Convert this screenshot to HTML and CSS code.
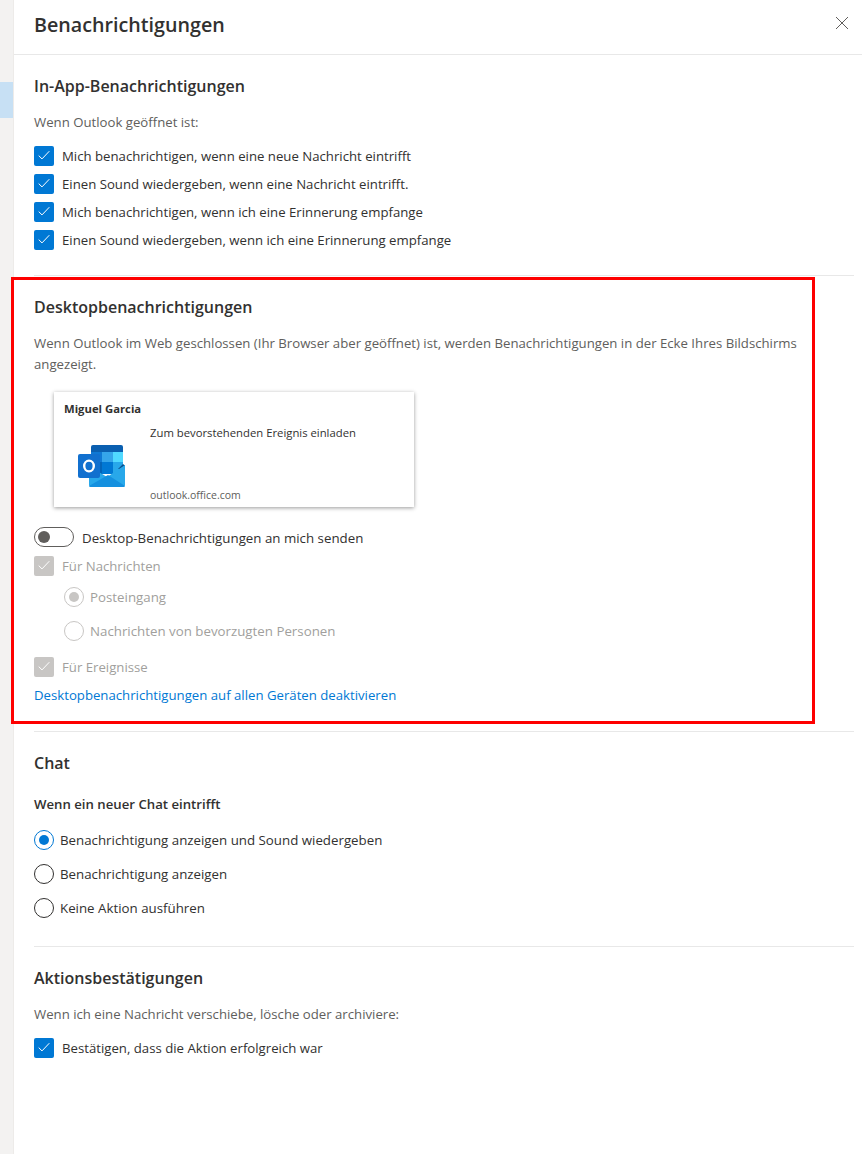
FILE: index.html
```html
<!DOCTYPE html>
<html lang="de">

<head>
    <meta charset="UTF-8">
    <title>Benachrichtigungen</title>
    <link rel="stylesheet" href="styles.css">
</head>

<body>
    <div id="container">
        <div id="sidebar">
            <div id="sidebarActive"></div>
        </div>

        <div id="panel">
            <div id="panelHeader">
                <h1 id="panelTitle">Benachrichtigungen</h1>
                <svg id="closeIcon" width="14" height="14" viewBox="0 0 14 14">
                    <path d="M1 1L13 13M13 1L1 13" stroke="#605e5c" stroke-width="1" fill="none"/>
                </svg>
            </div>

            <div class="section sectionInApp">
                <h2 class="sectionHeader">In-App-Benachrichtigungen</h2>
                <p class="sectionText">Wenn Outlook geöffnet ist:</p>
                <div class="checkList">
                    <div class="row">
                        <span class="check"><svg width="12" height="12" viewBox="0 0 12 12"><path d="M0.7 5.6L4 8.9L11.3 1.2" stroke="#fff" fill="none"/></svg></span>
                        <span class="rowLabel">Mich benachrichtigen, wenn eine neue Nachricht eintrifft</span>
                    </div>
                    <div class="row">
                        <span class="check"><svg width="12" height="12" viewBox="0 0 12 12"><path d="M0.7 5.6L4 8.9L11.3 1.2" stroke="#fff" fill="none"/></svg></span>
                        <span class="rowLabel">Einen Sound wiedergeben, wenn eine Nachricht eintrifft.</span>
                    </div>
                    <div class="row">
                        <span class="check"><svg width="12" height="12" viewBox="0 0 12 12"><path d="M0.7 5.6L4 8.9L11.3 1.2" stroke="#fff" fill="none"/></svg></span>
                        <span class="rowLabel">Mich benachrichtigen, wenn ich eine Erinnerung empfange</span>
                    </div>
                    <div class="row">
                        <span class="check"><svg width="12" height="12" viewBox="0 0 12 12"><path d="M0.7 5.6L4 8.9L11.3 1.2" stroke="#fff" fill="none"/></svg></span>
                        <span class="rowLabel">Einen Sound wiedergeben, wenn ich eine Erinnerung empfange</span>
                    </div>
                </div>
            </div>

            <div class="section sectionDesktop">
                <h2 class="sectionHeader">Desktopbenachrichtigungen</h2>
                <p class="sectionText desktopText">Wenn Outlook im Web geschlossen (Ihr Browser aber geöffnet) ist, werden Benachrichtigungen in der Ecke Ihres Bildschirms angezeigt.</p>

                <div id="previewCard">
                    <div id="previewName">Miguel Garcia</div>
                    <div id="previewBody">
                        <svg id="outlookLogo" width="48" height="44" viewBox="0 0 48 44">
                            <path d="M13 2a2 2 0 0 1 2-2h28a2 2 0 0 1 2 2v6H13z" fill="#0a5fb0"/>
                            <rect x="13" y="7" width="11" height="10" fill="#0f78d4"/>
                            <rect x="24" y="7" width="11" height="10" fill="#35a5ea"/>
                            <rect x="35" y="7" width="10" height="10" fill="#50d9ff"/>
                            <rect x="13" y="17" width="11" height="12" fill="#0364b8"/>
                            <rect x="24" y="17" width="11" height="12" fill="#0078d4"/>
                            <rect x="35" y="17" width="10" height="12" fill="#28a8ea"/>
                            <path d="M45 19L47 20.500V24L40 24z" fill="#0a4f8c"/>
                            <path d="M11 21L29 32L47 20V40a2 2 0 0 1-2 2H13a2 2 0 0 1-2-2z" fill="#28a8ea"/>
                            <path d="M11 41L30 30L47 41a2 2 0 0 1-2 1H13a2 2 0 0 1-2-1z" fill="#1490df"/>
                            <rect x="0" y="9" width="22" height="24" rx="2" fill="#1170cf"/>
                            <ellipse cx="11" cy="21" rx="4.800" ry="5.400" fill="none" stroke="#fff" stroke-width="2.400"/>
                        </svg>
                        <div id="previewText">
                            <div>Zum bevorstehenden Ereignis einladen</div>
                            <div id="previewUrl">outlook.office.com</div>
                        </div>
                    </div>
                </div>

                <div class="toggleRow">
                    <span class="toggle"><span class="toggleKnob"></span></span>
                    <span class="rowLabel">Desktop-Benachrichtigungen an mich senden</span>
                </div>
                <div class="row disabled messagesRow">
                    <span class="check"><svg width="12" height="12" viewBox="0 0 12 12"><path d="M0.7 5.6L4 8.9L11.3 1.2" stroke="#fff" fill="none"/></svg></span>
                    <span class="rowLabel">Für Nachrichten</span>
                </div>
                <div class="subOptions">
                    <div class="radioRow disabled">
                        <span class="radio radioOn"></span>
                        <span class="radioLabel">Posteingang</span>
                    </div>
                    <div class="radioRow disabled">
                        <span class="radio"></span>
                        <span class="radioLabel">Nachrichten von bevorzugten Personen</span>
                    </div>
                </div>
                <div class="row disabled">
                    <span class="check"><svg width="12" height="12" viewBox="0 0 12 12"><path d="M0.7 5.6L4 8.9L11.3 1.2" stroke="#fff" fill="none"/></svg></span>
                    <span class="rowLabel">Für Ereignisse</span>
                </div>
                <a href="#" class="disableLink">Desktopbenachrichtigungen auf allen Geräten deaktivieren</a>
            </div>

            <div class="section sectionChat">
                <h2 class="sectionHeader">Chat</h2>
                <div class="subHeader">Wenn ein neuer Chat eintrifft</div>
                <div class="radioRow">
                    <span class="radio radioOn"></span>
                    <span class="radioLabel">Benachrichtigung anzeigen und Sound wiedergeben</span>
                </div>
                <div class="radioRow">
                    <span class="radio"></span>
                    <span class="radioLabel">Benachrichtigung anzeigen</span>
                </div>
                <div class="radioRow">
                    <span class="radio"></span>
                    <span class="radioLabel">Keine Aktion ausführen</span>
                </div>
            </div>

            <div class="section sectionActions">
                <h2 class="sectionHeader">Aktionsbestätigungen</h2>
                <p class="sectionText">Wenn ich eine Nachricht verschiebe, lösche oder archiviere:</p>
                <div class="row">
                    <span class="check"><svg width="12" height="12" viewBox="0 0 12 12"><path d="M0.7 5.6L4 8.9L11.3 1.2" stroke="#fff" fill="none"/></svg></span>
                    <span class="rowLabel">Bestätigen, dass die Aktion erfolgreich war</span>
                </div>
            </div>
        </div>

        <div id="highlightFrame"></div>
    </div>
</body>

</html>
```

FILE: styles.css
```css
html, body {
    margin:0;
    padding:0;
    background-color:white;
}
#container {
    position:relative;
    display:flex;
    width:862px;
    height:1154px;
    overflow:hidden;
    font-family:"Open Sans", "Noto Sans", sans-serif;
    font-size:13.2px;
    color:#323130;
}
#sidebar {
    width:13px;
    flex-shrink:0;
    padding-top:82px;
    box-sizing:border-box;
    background-color:#f3f2f1;
}
#sidebarActive {
    height:36px;
    background-color:#c7e0f4;
}
#panel {
    flex:1;
    border-left:1px solid #edebe9;
}
#panelHeader {
    display:flex;
    justify-content:space-between;
    height:55px;
    box-sizing:border-box;
    padding:0 13px 0 20px;
    border-bottom:1px solid #e8e8e8;
}
#panelTitle {
    margin:0;
    font-size:19.7px;
    font-weight:600;
    line-height:50px;
}
#closeIcon {
    margin-top:16px;
}
.section {
    margin:0 8px 0 20px;
    border-bottom:1px solid #e8e8e8;
}
.sectionInApp {
    height:221px;
    padding-top:19px;
    box-sizing:border-box;
}
.sectionDesktop {
    height:456px;
    padding-top:19px;
    box-sizing:border-box;
}
.sectionChat {
    height:215px;
    padding-top:19px;
    box-sizing:border-box;
}
.sectionActions {
    border-bottom:none;
    padding-top:19px;
}
.sectionHeader {
    margin:0;
    font-size:16px;
    font-weight:600;
    line-height:24px;
}
.sectionText {
    margin:14px 0 0 0;
    line-height:21px;
    color:#605e5c;
}
.desktopText {
    max-width:770px;
}
.checkList {
    margin-top:13px;
}
.row {
    display:flex;
    align-items:center;
    height:20px;
    margin-bottom:8px;
}
.messagesRow {
    margin-bottom:4px;
}
.check {
    display:flex;
    align-items:center;
    justify-content:center;
    width:20px;
    height:20px;
    margin-right:8px;
    border-radius:2px;
    background-color:#0078d4;
}
.rowLabel {
    line-height:20px;
}
.sectionActions .row {
    margin-top:13px;
}
#previewCard {
    width:360px;
    height:115px;
    box-sizing:border-box;
    margin:17px 0 20px 20px;
    padding:9px 10px 0 10px;
    box-shadow:0 1px 4px rgba(0, 0, 0, 0.4);
}
#previewName {
    font-size:11.3px;
    font-weight:700;
    line-height:16px;
}
#previewBody {
    display:flex;
}
#outlookLogo {
    margin:28px 0 0 14px;
}
#previewText {
    display:flex;
    flex-direction:column;
    justify-content:space-between;
    height:78px;
    margin:8px 0 0 24px;
    font-size:11.3px;
    line-height:16px;
}
#previewUrl {
    font-size:10.5px;
    color:#605e5c;
}
.toggleRow {
    display:flex;
    align-items:center;
    height:20px;
    margin-bottom:9px;
}
.toggleRow .rowLabel {
    padding-top:1px;
    font-size:13.3px;
}
.toggle {
    display:flex;
    align-items:center;
    width:40px;
    height:20px;
    box-sizing:border-box;
    margin-right:8px;
    padding-left:3px;
    border:1px solid #605e5c;
    border-radius:10px;
}
.toggleKnob {
    width:12px;
    height:12px;
    border-radius:50%;
    background-color:#605e5c;
}
.subOptions {
    margin:0 0 0 30px;
}
.radioRow {
    display:flex;
    align-items:center;
    height:34px;
}
.radio {
    position:relative;
    width:20px;
    height:20px;
    box-sizing:border-box;
    margin-right:6px;
    border:1px solid #323130;
    border-radius:50%;
}
.radioOn {
    border-color:#0078d4;
}
.radioOn::after {
    content:"";
    position:absolute;
    top:4px;
    left:4px;
    width:10px;
    height:10px;
    border-radius:50%;
    background-color:#0078d4;
}
.radioLabel {
    font-size:13.3px;
}
.disabled {
    color:#a19f9d;
}
.disabled .check {
    background-color:#c8c6c4;
}
.disabled .radio {
    border-color:#c8c6c4;
}
.disabled .radioOn::after {
    background-color:#c8c6c4;
}
.subOptions .radioRow:last-child {
    margin-bottom:9px;
}
.disableLink {
    display:block;
    line-height:20px;
    color:#0078d4;
    text-decoration:none;
}
.subHeader {
    margin:19px 0 9px 0;
    font-weight:600;
    line-height:20px;
}
#highlightFrame {
    position:absolute;
    left:11px;
    top:277px;
    width:798px;
    height:441px;
    border:3px solid #fe0000;
}
```
